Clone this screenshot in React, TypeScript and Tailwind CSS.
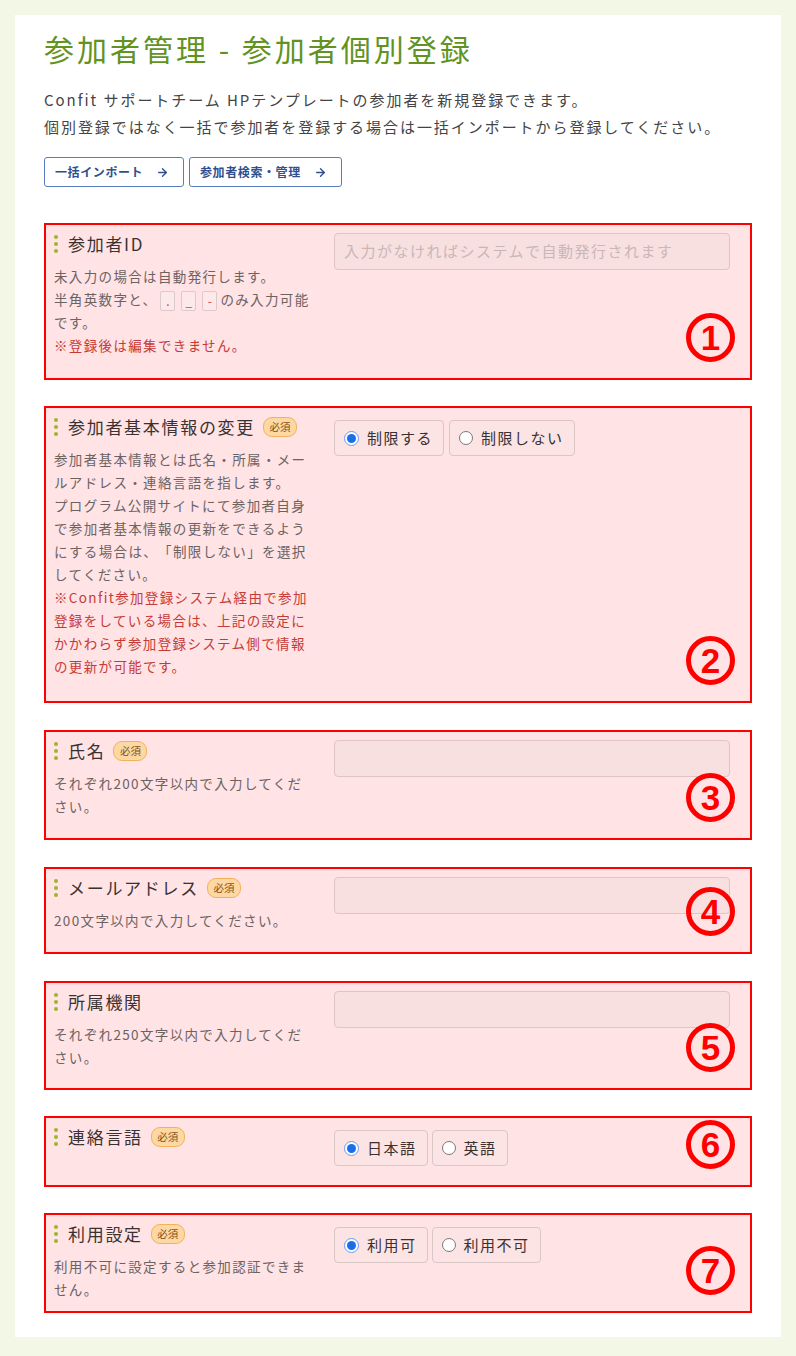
import React from "react";
import { ArrowRight } from "lucide-react";

const font = { fontFamily: '"Noto Sans CJK JP", "Noto Sans", sans-serif' };

const Marker = () => (
    <span className="flex flex-col gap-[3px] mr-[10px] shrink-0">
        <span className="w-[4px] h-[4px] rounded-full bg-[#9db52c]" />
        <span className="w-[4px] h-[4px] rounded-full bg-[#9db52c]" />
        <span className="w-[4px] h-[4px] rounded-full bg-[#9db52c]" />
    </span>
);

const Badge = () => (
    <span className="ml-[8px] inline-flex items-center justify-center h-[20px] w-[34px] rounded-[9px] border border-[#f2b25c] bg-[#fdd8a3] text-[10.5px] text-[#7d5220] leading-none">
        必須
    </span>
);

const Num = ({ n }: { n: string }) => (
    <div className="absolute right-[15px] bottom-[16px] w-[49px] h-[49px] rounded-full border-[5px] border-[#ff0000] flex items-center justify-center">
        <span className="text-[35px] font-bold text-[#ff0000] leading-none" style={{ fontFamily: '"Liberation Sans", Arial, sans-serif' }}>
            {n}
        </span>
    </div>
);

const Radio = ({ label, checked }: { label: string; checked?: boolean }) => (
    <div className="flex items-center h-[36px] pl-[9px] pr-[10px] border border-[#dbc6c6] rounded-[4px] bg-[#fce3e4] text-[15px] tracking-[0.1em] text-[#3a3232]">
        {checked ? (
            <span className="w-[15px] h-[15px] rounded-full border-[1.5px] border-[#6a9bf2] bg-white flex items-center justify-center mr-[8px]">
                <span className="w-[9px] h-[9px] rounded-full bg-[#1a6fe8]" />
            </span>
        ) : (
            <span className="w-[14px] h-[14px] rounded-full border border-[#807676] bg-white mr-[8px]" />
        )}
        {label}
    </div>
);

const Code = ({ c }: { c: string }) => (
    <span className="inline-flex items-center justify-center w-[15px] h-[20px] mx-[3px] align-middle border border-[#dccaca] rounded-[2px] bg-[#fde9ea] text-[12px] leading-none text-[#e0443a] tracking-normal">
        {c}
    </span>
);

interface SectionProps {
    label: string;
    required?: boolean;
    num: string;
    box: string;
    children?: React.ReactNode;
    right: React.ReactNode;
}

const Section: React.FC<SectionProps> = ({ label, required, num, box, children, right }) => {
    return (
        <div className={`relative border-2 border-[#ff0000] bg-[#ffe3e5] pl-[8px] pr-[20px] pt-[6px] ${box}`}>
            <div className="flex gap-[18px]">
                <div className="w-[262px]">
                    <div className="flex items-center h-[26px]">
                        <Marker />
                        <span className="text-[17px] tracking-[0.1em] text-[#3a3232]">{label}</span>
                        {required && <Badge />}
                    </div>
                    {children && (
                        <div className="mt-[8px] text-[13.5px] leading-[23px] tracking-[0.1em] text-[#6b6262] [text-spacing-trim:space-all]">
                            {children}
                        </div>
                    )}
                </div>
                <div className="w-[396px]">{right}</div>
            </div>
            <Num n={num} />
        </div>
    );
};

const Input = ({ placeholder }: { placeholder?: string }) => (
    <div className="h-[37px] mt-[2px] border border-[#dcc6c6] rounded-[4px] bg-[#f8dfe0] pl-[9px] flex items-center text-[15px] tracking-[0.1em] text-[#cbb6b6]">
        {placeholder}
    </div>
);

export default function App() {
    return (
        <div className="min-h-[1356px] bg-[#f3f8e6] p-[15px]" style={font}>
            <div className="bg-white px-[29px] pt-[13px] pb-[24px]">
                <h1 className="text-[30px] leading-[40px] tracking-[0.1em] text-[#62921f]">参加者管理 - 参加者個別登録</h1>
                <div className="mt-[18px] text-[15px] leading-[27px] tracking-[0.13em] text-[#444]">
                    <p>Confit サポートチーム HPテンプレートの参加者を新規登録できます。</p>
                    <p>個別登録ではなく一括で参加者を登録する場合は一括インポートから登録してください。</p>
                </div>
                <div className="flex gap-[5px] mt-[17px]">
                    <button className="w-[140px] h-[30px] flex items-center justify-between pl-[10px] pr-[14px] border border-[#5a7cc0] rounded-[3px] bg-white text-[12px] font-bold tracking-[0.05em] text-[#2f4f8f]">
                        一括インポート
                        <ArrowRight size={13} strokeWidth={2.5} />
                    </button>
                    <button className="w-[153px] h-[30px] flex items-center justify-between pl-[10px] pr-[14px] border border-[#5a7cc0] rounded-[3px] bg-white text-[12px] font-bold tracking-[0.05em] text-[#2f4f8f]">
                        参加者検索・管理
                        <ArrowRight size={13} strokeWidth={2.5} />
                    </button>
                </div>

                <div className="mt-[36px] flex flex-col">
                    <Section
                        label="参加者ID"
                        num="1"
                        box="h-[157px]"
                        right={<Input placeholder="入力がなければシステムで自動発行されます" />}
                    >
                        <p>未入力の場合は自動発行します。</p>
                        <p>
                            半角英数字と、<Code c="." />
                            <Code c="_" />
                            <Code c="-" />
                            のみ入力可能です。
                        </p>
                        <p className="text-[#c63a36]">※登録後は編集できません。</p>
                    </Section>

                    <Section
                        label="参加者基本情報の変更"
                        required
                        num="2"
                        box="h-[297px] mt-[26px]"
                        right={
                            <div className="flex gap-[5px] mt-[6px]">
                                <Radio label="制限する" checked />
                                <Radio label="制限しない" />
                            </div>
                        }
                    >
                        <p>参加者基本情報とは氏名・所属・メールアドレス・連絡言語を指します。</p>
                        <p>プログラム公開サイトにて参加者自身で参加者基本情報の更新をできるようにする場合は、「制限しない」を選択してください。</p>
                        <p className="text-[#c63a36]">
                            ※Confit参加登録システム経由で参加登録をしている場合は、上記の設定にかかわらず参加登録システム側で情報の更新が可能です。
                        </p>
                    </Section>

                    <Section label="氏名" required num="3" box="h-[110px] mt-[27px]" right={<Input />}>
                        <p>それぞれ200文字以内で入力してください。</p>
                    </Section>

                    <Section label="メールアドレス" required num="4" box="h-[87px] mt-[27px]" right={<Input />}>
                        <p>200文字以内で入力してください。</p>
                    </Section>

                    <Section label="所属機関" num="5" box="h-[109px] mt-[27px]" right={<Input />}>
                        <p>それぞれ250文字以内で入力してください。</p>
                    </Section>

                    <Section
                        label="連絡言語"
                        required
                        num="6"
                        box="h-[71px] mt-[26px]"
                        right={
                            <div className="flex gap-[4px] mt-[6px]">
                                <Radio label="日本語" checked />
                                <Radio label="英語" />
                            </div>
                        }
                    />

                    <Section
                        label="利用設定"
                        required
                        num="7"
                        box="h-[100px] mt-[26px]"
                        right={
                            <div className="flex gap-[4px] mt-[6px]">
                                <Radio label="利用可" checked />
                                <Radio label="利用不可" />
                            </div>
                        }
                    >
                        <p>利用不可に設定すると参加認証できません。</p>
                    </Section>
                </div>
            </div>
        </div>
    );
}
